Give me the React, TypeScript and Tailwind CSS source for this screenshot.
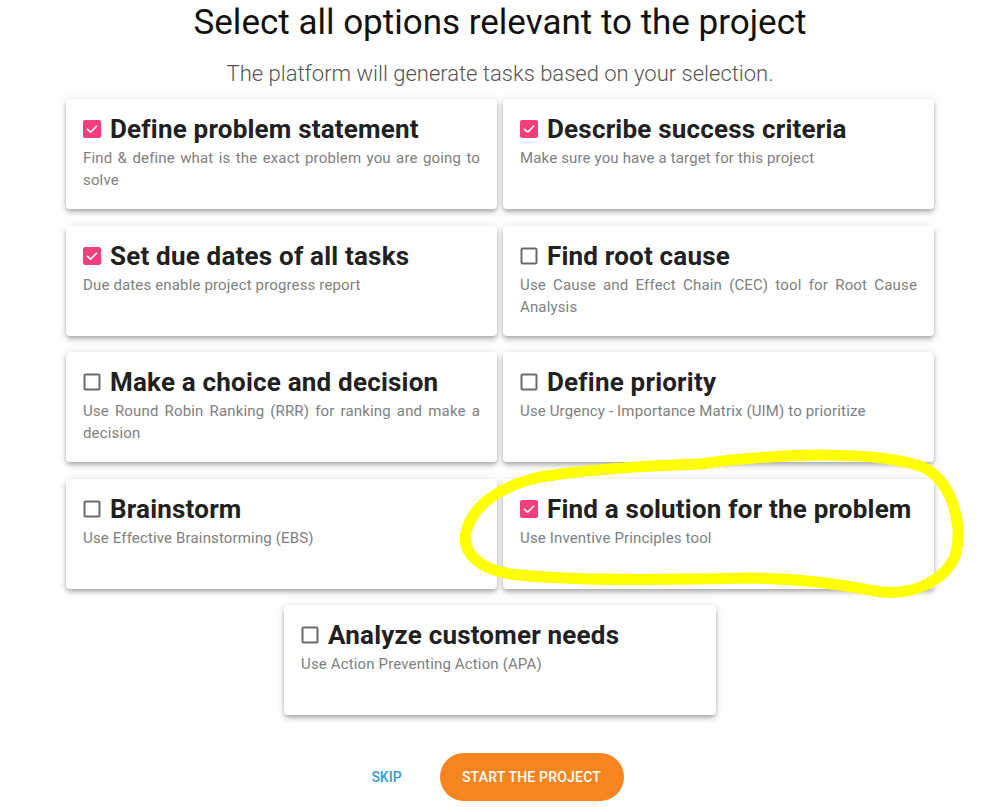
import React from "react";

type Option = {
  title: string;
  description: string;
  checked: boolean;
};

const options: Option[] = [
  {
    title: "Define problem statement",
    description: "Find & define what is the exact problem you are going to solve",
    checked: true,
  },
  {
    title: "Describe success criteria",
    description: "Make sure you have a target for this project",
    checked: true,
  },
  {
    title: "Set due dates of all tasks",
    description: "Due dates enable project progress report",
    checked: true,
  },
  {
    title: "Find root cause",
    description: "Use Cause and Effect Chain (CEC) tool for Root Cause Analysis",
    checked: false,
  },
  {
    title: "Make a choice and decision",
    description: "Use Round Robin Ranking (RRR) for ranking and make a decision",
    checked: false,
  },
  {
    title: "Define priority",
    description: "Use Urgency - Importance Matrix (UIM) to prioritize",
    checked: false,
  },
  {
    title: "Brainstorm",
    description: "Use Effective Brainstorming (EBS)",
    checked: false,
  },
  {
    title: "Find a solution for the problem",
    description: "Use Inventive Principles tool",
    checked: true,
  },
];

const lastOption: Option = {
  title: "Analyze customer needs",
  description: "Use Action Preventing Action (APA)",
  checked: false,
};

function Checkbox({ checked }: { checked: boolean }) {
  if (checked) {
    return (
      <svg width="18" height="18" viewBox="0 0 18 18" className="shrink-0">
        <rect x="0" y="0" width="18" height="18" rx="2" fill="#f4407a" />
        <polyline
          points="4.5,9.3 7.6,12.2 13.5,6.2"
          fill="none"
          stroke="#fff"
          strokeWidth="1.6"
          strokeLinecap="round"
          strokeLinejoin="round"
        />
      </svg>
    );
  }
  return (
    <svg width="18" height="18" viewBox="0 0 18 18" className="shrink-0">
      <rect
        x="1.5"
        y="1.5"
        width="15"
        height="15"
        rx="1"
        fill="none"
        stroke="#6b6b6b"
        strokeWidth="2"
      />
    </svg>
  );
}

function OptionCard({ option }: { option: Option }) {
  return (
    <div className="h-[110px] rounded-[4px] bg-white px-[17px] pt-[16px] shadow-[0_2px_4px_-1px_rgba(0,0,0,0.2),0_4px_5px_0_rgba(0,0,0,0.14),0_1px_10px_0_rgba(0,0,0,0.12)]">
      <div className="flex h-[28px] items-center gap-[9px]">
        <Checkbox checked={option.checked} />
        <span className="text-[26px] font-bold leading-[28px] tracking-[0.2px] text-[#212121]">
          {option.title}
        </span>
      </div>
      <p className="mt-[4px] text-justify text-[15px] leading-[22px] tracking-[0.15px] text-[#808080]">
        {option.description}
      </p>
    </div>
  );
}

export default function App() {
  return (
    <div className="relative min-h-[807px] w-[1005px] bg-white font-[Roboto,sans-serif]">
      <div className="flex w-[1000px] flex-col items-center">
        <h1 className="pt-[3px] text-[35px] font-normal leading-[40px] text-[#111]">
          Select all options relevant to the project
        </h1>
        <p className="mt-[17px] text-[22px] font-light leading-[28px] text-[#555]">
          The platform will generate tasks based on your selection.
        </p>

        <div className="mt-[11px] grid w-[868px] grid-cols-2 gap-x-[6px] gap-y-[16.5px]">
          {options.map((option) => (
            <OptionCard key={option.title} option={option} />
          ))}
        </div>

        <div className="mt-[16.5px] w-[432px]">
          <OptionCard option={lastOption} />
        </div>

        <div className="mt-[38px] flex w-full justify-center gap-[9px] pr-[34px]">
          <button className="h-[48px] w-[88px] text-[14px] font-medium uppercase text-[#3a9ad9]">
            Skip
          </button>
          <button className="h-[48px] w-[184px] rounded-full bg-[#f7841f] text-[14px] font-medium uppercase tracking-[0.2px] text-white">
            Start the project
          </button>
        </div>
      </div>

      {/* hand-drawn highlight */}
      <svg
        className="pointer-events-none absolute left-0 top-0"
        width="1005"
        height="807"
        viewBox="0 0 1005 807"
      >
        <path
          d="M700 464 C780 453, 880 450, 925 468 C955 485, 963 530, 955 556 C945 580, 915 595, 882 592 C845 586, 805 578, 745 578 C665 580, 565 581, 510 574 C475 568, 462 550, 466 532 C472 506, 500 486, 540 477 C590 469, 640 466, 700 464 Z"
          fill="none"
          stroke="#ffff00"
          strokeWidth="11"
          strokeLinejoin="round"
        />
      </svg>
    </div>
  );
}
